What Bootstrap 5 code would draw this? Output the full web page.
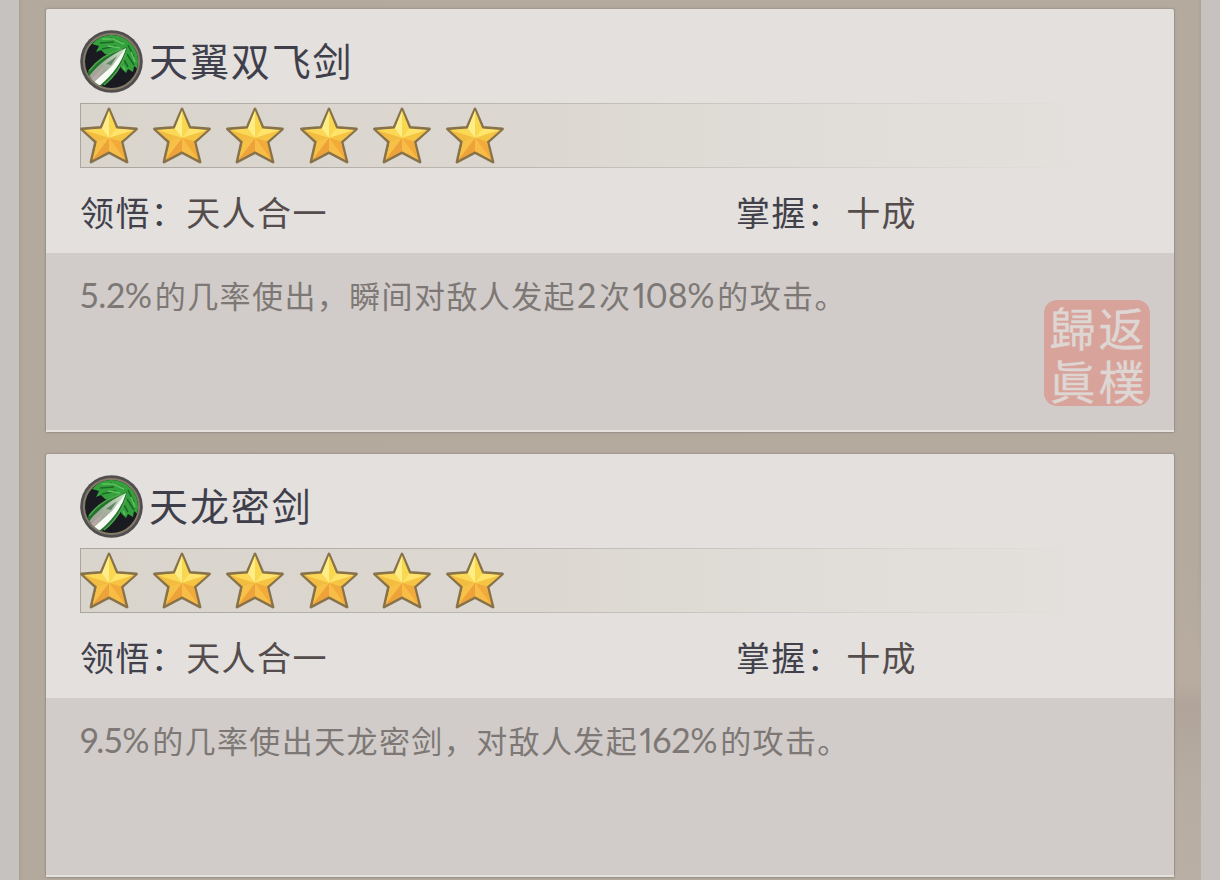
<!DOCTYPE html>
<html lang="zh-CN">
<head>
  <meta charset="UTF-8">
  <meta name="viewport" content="width=device-width, initial-scale=1.0">
  <title>剑法</title>
  <link href="https://cdn.jsdelivr.net/npm/bootstrap@5.3.0/dist/css/bootstrap.min.css" rel="stylesheet">
  <style>
    body {
      background: #c5c2bf;
      font-family: Lato, "Noto Sans CJK SC", sans-serif;
      overflow: hidden;
    }
    .panel {
      width: 1182px;
      height: 880px;
      padding: 8px 26px 0;
      gap: 20px;
      background: linear-gradient(90deg, #aba392, #b4a99d 4px, #b5aa9e 1178px, #aca297);
      overflow: hidden;
    }
    .panel-mist {
      right: 0;
      top: 560px;
      width: 26px;
      height: 320px;
      background: linear-gradient(#b9aca000, #b8aca0 38%, #b1a59b 45%, #b7ada3 75%, #b9afa5);
    }
    .skill {
      height: 425px;
      border: 1px solid #9b9389;
      border-top-color: #a39b91;
      border-radius: 3px;
      background: #e3e0dd;
      box-shadow: 0 0 2px #948b8180;
    }
    .skill-head { height: 244px; padding: 21px 34px 0; }
    .skill-icon { width: 63px; height: 63px; }
    .skill-name {
      margin-left: 6px;
      font-size: 39px;
      line-height: 63px;
      letter-spacing: 1.9px;
      color: #3f3f4b;
      font-weight: 400;
    }
    .star-bar {
      width: 1000px;
      height: 65px;
      margin-top: 10px;
      padding-top: 3px;
      gap: 15.2px;
      border: 1px solid;
      border-right: 0;
      border-image: linear-gradient(90deg, #aaa69e, #bcb9b2 45%, #d2cfca 75%, #e3e0dd) 1;
      background: linear-gradient(90deg, #d9d4cc, #dcd8d1 45%, #e1ded9 80%, #e3e0dd);
    }
    .star-bar svg { width: 58px; height: 58px; flex: none; }
    .star-bar svg:first-child { margin-left: -1px; }
    .skill-stats {
      margin-top: 20px;
      font-size: 34px;
      line-height: 50px;
      letter-spacing: 1.4px;
      color: #554d4d;
    }
    .stat-first { width: 656px; }
    .stat-label { color: #41414c; }
    .stat-last .stat-label { margin-right: 4px; }
    .skill-text {
      padding: 18px 34px 0;
      background: #d1ccc9;
      border-bottom: 2px solid #e5e1dd;
      font-size: 31px;
      line-height: 50px;
      letter-spacing: 1.4px;
      color: #7d7875;
    }
    .num {
      margin-right: 3px;
      font-size: 34px;
      line-height: 1;
      letter-spacing: -.3px;
      font-variant-numeric: proportional-nums;
    }
    .num:not(:first-child) { margin-left: 1px; }
    .seal {
      right: 24px;
      top: 291px;
      width: 106px;
      height: 106px;
      padding: 1px 4px;
      row-gap: 2px;
      border-radius: 13px;
      background: #d8a39b;
      color: #ded6d2;
      font-family: "Noto Sans CJK TC", sans-serif;
      font-size: 46px;
      line-height: 50px;
      -webkit-text-stroke: .3px #ded6d2;
    }
    .seal span { width: 49px; height: 50px; text-align: center; }
  </style>
</head>
<body>
  <!-- Shared drawings -->
  <svg class="position-absolute" width="0" height="0" aria-hidden="true">
    <defs>
      <linearGradient id="gold" x1="0" y1="0" x2="0" y2="1">
        <stop offset="0" stop-color="#ffee85"/>
        <stop offset=".45" stop-color="#f8d04b"/>
        <stop offset="1" stop-color="#efa43b"/>
      </linearGradient>
      <clipPath id="disc"><circle cx="31.5" cy="31.5" r="26.5"/></clipPath>
      <linearGradient id="blade" x1="0" y1="1" x2="1" y2="0">
        <stop offset="0" stop-color="#a59a99"/>
        <stop offset=".45" stop-color="#9fac98"/>
        <stop offset="1" stop-color="#c9e5c4"/>
      </linearGradient>
    </defs>
    <symbol id="star" viewBox="0 0 58 58">
      <path d="M29 2 37 20.5 56.5 22 42 35 47 55 29 45.5 11 55 15.5 35 1.5 22 21 20.5Z" fill="url(#gold)" stroke="#87724a" stroke-width="2.8" stroke-linejoin="round"/>
      <path d="M29 3.5V31L21.8 21.5Z" fill="#ffee88"/>
      <path d="M29 3.5V31L36.2 21.5Z" fill="#f9d74f"/>
      <path d="M3.5 23 21.8 21.5 29 31Z" fill="#fbd855"/>
      <path d="M3.5 23 29 31 17 34.5Z" fill="#f2bc40"/>
      <path d="M54.5 23 36.2 21.5 29 31Z" fill="#ffe36a"/>
      <path d="M54.5 23 29 31 41 34.5Z" fill="#f5c443"/>
      <path d="M12.5 53 17 34.5 29 31Z" fill="#f7c147"/>
      <path d="M12.5 53 29 31V44.2Z" fill="#eda23a"/>
      <path d="M45.5 53 41 34.5 29 31Z" fill="#f2aa3b"/>
      <path d="M45.5 53 29 31V44.2Z" fill="#f8bd46"/>
    </symbol>
    <symbol id="sword" viewBox="0 0 63 63">
      <circle cx="31.5" cy="31.5" r="31.3" fill="#504e4e"/>
      <circle cx="31.5" cy="31.5" r="27.5" fill="#191b20" stroke="#857a69" stroke-width="2"/>
      <g clip-path="url(#disc)">
        <path d="M12 14 22 5Q36 0 48 10Q62 22 59 40L54 36 53 42 48 39 46 43 41 38 40 28 25 24 21 20 16 22 19 16Z" fill="#35a13d"/>
        <path d="M20 13 34 12M30 8 43 13M22 19 36 16M48 15 54 27M47 24 54 35M44 30 48 37" stroke="#1c6a28" stroke-width="1.6" fill="none"/>
        <path d="M22 9 33 9 44 14M28 16 40 18M51 22 55 32M43 36 45 40" stroke="#5fc35f" stroke-width="1.5" fill="none"/>
        <path d="M5 46Q17 27 47 17Q43 39 23 55L14 62Z" fill="#22742c"/>
        <path d="M9 41Q21 25 42 19M24 55Q39 43 46 24" fill="none" stroke="#4fa54f" stroke-width="1.6"/>
        <path d="M7 49 Q20 30 46 18 Q39 40 18 57Z" fill="url(#blade)"/>
        <path d="M13 53 32 36 46 18 Q40 39 19 56Z" fill="#f7fcf4"/>
        <path d="M10 50 26 35 18 48 13 53Z" fill="#b8a9a9"/>
        <path d="M26 34 37 26 31 35Z" fill="#628469"/>
      </g>
    </symbol>
  </svg>

  <main class="panel position-relative mx-auto d-flex flex-column">
    <div class="panel-mist position-absolute"></div>

    <!-- 天翼双飞剑 -->
    <section class="skill position-relative d-flex flex-column flex-shrink-0">
      <div class="skill-head">
        <div class="d-flex align-items-center">
          <svg class="skill-icon"><use href="#sword"/></svg>
          <h1 class="skill-name mb-0">天翼双飞剑</h1>
        </div>
        <div class="star-bar d-flex">
          <svg><use href="#star"/></svg>
          <svg><use href="#star"/></svg>
          <svg><use href="#star"/></svg>
          <svg><use href="#star"/></svg>
          <svg><use href="#star"/></svg>
          <svg><use href="#star"/></svg>
        </div>
        <div class="skill-stats d-flex">
          <div class="stat-first"><span class="stat-label">领悟：</span>天人合一</div>
          <div class="stat-last"><span class="stat-label">掌握：</span>十成</div>
        </div>
      </div>
      <div class="skill-text flex-grow-1"><span class="num">5.2%</span>的几率使出，瞬间对敌人发起<span class="num">2</span>次<span class="num">108%</span>的攻击。</div>
      <div class="seal position-absolute d-flex flex-wrap">
        <span>歸</span>
        <span>返</span>
        <span>眞</span>
        <span>樸</span>
      </div>
    </section>

    <!-- 天龙密剑 -->
    <section class="skill position-relative d-flex flex-column flex-shrink-0">
      <div class="skill-head">
        <div class="d-flex align-items-center">
          <svg class="skill-icon"><use href="#sword"/></svg>
          <h1 class="skill-name mb-0">天龙密剑</h1>
        </div>
        <div class="star-bar d-flex">
          <svg><use href="#star"/></svg>
          <svg><use href="#star"/></svg>
          <svg><use href="#star"/></svg>
          <svg><use href="#star"/></svg>
          <svg><use href="#star"/></svg>
          <svg><use href="#star"/></svg>
        </div>
        <div class="skill-stats d-flex">
          <div class="stat-first"><span class="stat-label">领悟：</span>天人合一</div>
          <div class="stat-last"><span class="stat-label">掌握：</span>十成</div>
        </div>
      </div>
      <div class="skill-text flex-grow-1"><span class="num">9.5%</span>的几率使出天龙密剑，对敌人发起<span class="num">162%</span>的攻击。</div>
    </section>
  </main>

  <script src="https://cdn.jsdelivr.net/npm/bootstrap@5.3.0/dist/js/bootstrap.bundle.min.js"></script>
</body>
</html>
